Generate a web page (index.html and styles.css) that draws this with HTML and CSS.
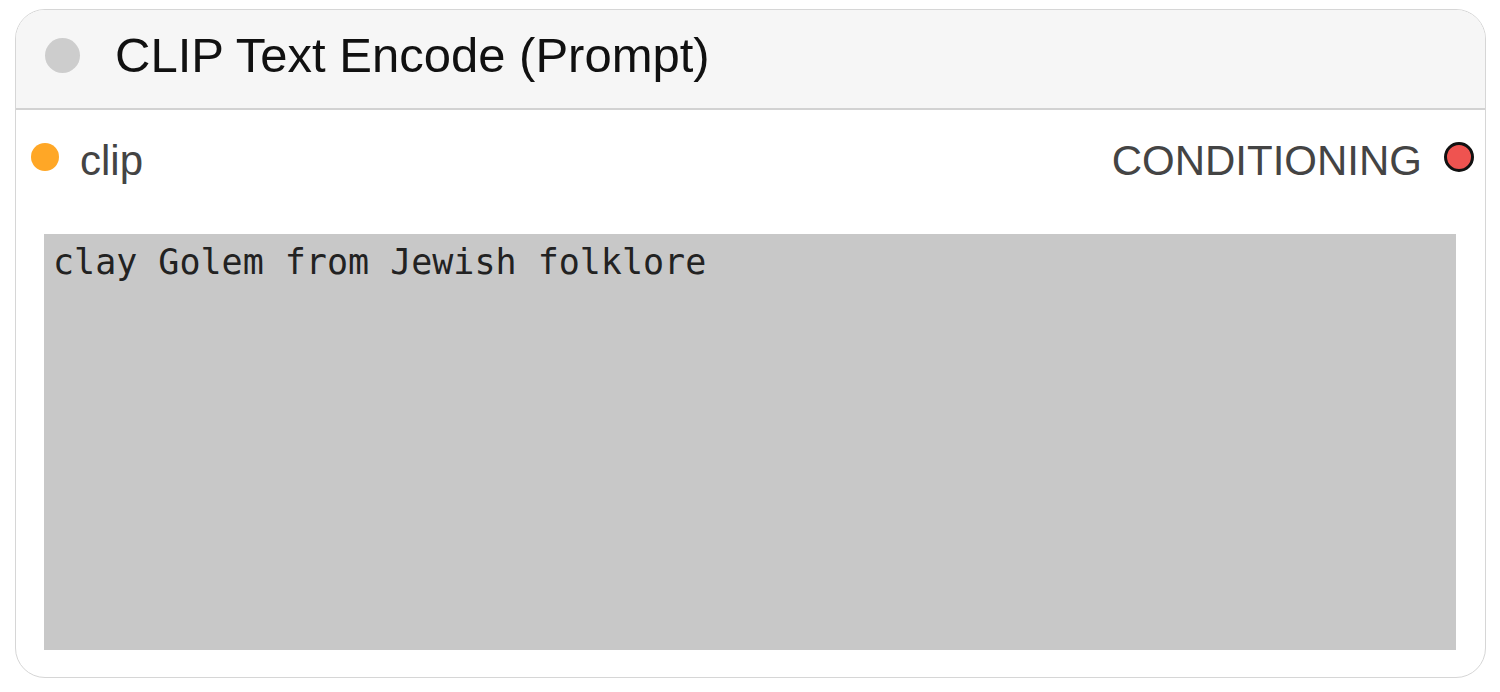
FILE: index.html
```html
<html>
<head>
  <title>CLIP Text Encode (Prompt)</title>
  <link rel="stylesheet" href="styles.css">
</head>
<body>
  <div class="node">
    <div class="node-header">
      <span class="collapse-dot"></span>
      <span class="node-title">CLIP Text Encode (Prompt)</span>
    </div>
    <div class="node-body">
      <div class="slots">
        <div class="slot slot-in">
          <span class="dot dot-clip"></span>
          <span class="slot-label">clip</span>
        </div>
        <div class="slot slot-out">
          <span class="slot-label">CONDITIONING</span>
          <span class="dot dot-cond"></span>
        </div>
      </div>
      <textarea class="prompt" readonly>clay Golem from Jewish folklore</textarea>
    </div>
  </div>
</body>
</html>
```

FILE: styles.css
```css
body {
  margin: 0;
  background-color: #FFF;
  font-family: "Liberation Sans", Arial, sans-serif;
}
.node {
  box-sizing: border-box;
  margin: 9px 0 0 15px;
  width: 1471px;
  height: 669px;
  border: 1.5px solid #D6D6D6;
  border-radius: 30px;
  overflow: hidden;
  display: flex;
  flex-direction: column;
}
.node-header {
  box-sizing: border-box;
  height: 100px;
  flex-shrink: 0;
  background-color: #F6F6F6;
  border-bottom: 2px solid #D2D2D2;
  display: flex;
  align-items: center;
  padding: 0 0 8px 29px;
}
.collapse-dot {
  width: 35px;
  height: 35px;
  border-radius: 50%;
  background-color: #CDCDCD;
}
.node-title {
  margin-left: 35px;
  font-size: 49px;
  color: #111;
}
.node-body {
  flex: 1;
  display: flex;
  flex-direction: column;
  padding: 22px 0 27px 0;
}
.slots {
  display: flex;
  justify-content: space-between;
  align-items: center;
  height: 50px;
  padding: 0 11px 0 15px;
}
.slot {
  display: flex;
  align-items: center;
}
.slot-label {
  font-size: 42px;
  color: #444;
  padding-top: 7px;
}
.dot {
  box-sizing: border-box;
  border-radius: 50%;
}
.dot-clip {
  width: 28px;
  height: 28px;
  background-color: #FFA726;
  margin-right: 21px;
}
.dot-cond {
  width: 30px;
  height: 30px;
  background-color: #EF5350;
  border: 3px solid #111;
  margin-left: 22px;
}
.prompt {
  flex: 1;
  margin: 52px 29px 0 28px;
  padding: 8px 9px;
  border: none;
  outline: none;
  resize: none;
  overflow: hidden;
  background-color: #C8C8C8;
  color: #222;
  font-family: "DejaVu Sans Mono", monospace;
  font-size: 35px;
}
```
